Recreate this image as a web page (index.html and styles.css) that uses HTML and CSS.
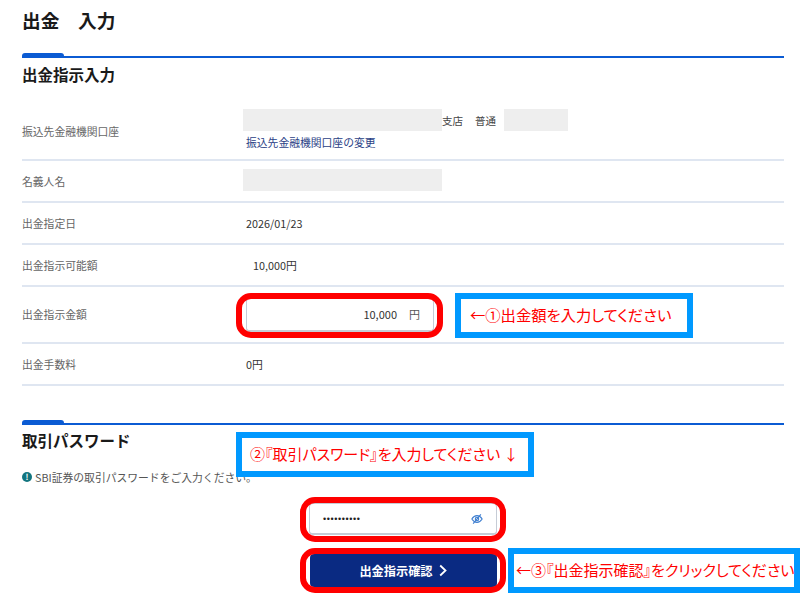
FILE: index.html
```html
<!DOCTYPE html>
<html lang="ja">
<head>
<meta charset="utf-8">
<title>出金 入力</title>
<link rel="stylesheet" href="styles.css">
</head>
<body>
<main class="page">
  <h1 class="title">出金　入力</h1>

  <section class="first">
    <div class="accent"></div>
    <div class="rule"></div>
    <h2 class="heading">出金指示入力</h2>
    <div class="row row-bank">
      <div class="label label-bank">振込先金融機関口座</div>
      <div class="value bank">
        <div class="bank-line">
          <span class="mask mask-wide"></span>
          <span class="bank-text">支店</span>
          <span class="bank-text bank-type">普通</span>
          <span class="mask mask-narrow"></span>
        </div>
        <a class="link" href="#">振込先金融機関口座の変更</a>
      </div>
    </div>
    <div class="row">
      <div class="label">名義人名</div>
      <div class="value"><span class="mask mask-wide mask-name"></span></div>
    </div>
    <div class="row">
      <div class="label">出金指定日</div>
      <div class="value">2026/01/23</div>
    </div>
    <div class="row">
      <div class="label">出金指示可能額</div>
      <div class="value value-inset">10,000円</div>
    </div>
    <div class="row row-input">
      <div class="label label-input">出金指示金額</div>
      <div class="value">
        <div class="field amount"><span>10,000</span><span class="unit">円</span></div>
      </div>
    </div>
    <div class="row">
      <div class="label">出金手数料</div>
      <div class="value">0円</div>
    </div>
  </section>

  <section class="second">
    <div class="accent"></div>
    <div class="rule"></div>
    <h2 class="heading heading-pw">取引パスワード</h2>
    <p class="note"><span class="note-icon">!</span>SBI証券の取引パスワードをご入力ください。</p>
    <div class="form">
      <div class="field password">
        <span class="dots">••••••••••</span>
        <svg class="eye" viewBox="0 0 14 14" width="12" height="12" aria-hidden="true">
          <path d="M1 7c1.600-2.600 3.600-3.900 6-3.900S11.400 4.400 13 7c-1.600 2.600-3.600 3.900-6 3.900S2.600 9.600 1 7z" fill="none" stroke="#3f7fd0" stroke-width="1.300"/>
          <circle cx="7" cy="7" r="2" fill="none" stroke="#3f7fd0" stroke-width="1.300"/>
          <path d="M2.500 12.500 11.500 1.500" stroke="#3f7fd0" stroke-width="1.300" fill="none"/>
        </svg>
      </div>
      <button class="submit" type="button">出金指示確認
        <svg class="chevron" viewBox="0 0 8 12" width="8" height="13" aria-hidden="true"><path d="M1.200 1 6.500 6 1.200 11" fill="none" stroke="#fff" stroke-width="1.800"/></svg>
      </button>
    </div>
  </section>
</main>

<div class="ring ring-amount"></div>
<div class="ring ring-password"></div>
<div class="ring ring-submit"></div>
<div class="callout callout-1">←①出金額を入力してください</div>
<div class="callout callout-2">②『取引パスワード』を入力してください ↓</div>
<div class="callout callout-3">←③『出金指示確認』をクリックしてください</div>
</body>
</html>
```

FILE: styles.css
```css
* { box-sizing: border-box; }
html, body { margin: 0; padding: 0; }
body {
  position: relative;
  width: 800px;
  height: 604px;
  overflow: hidden;
  background: #fff;
  color: #333;
  font-family: "Noto Sans CJK JP", "Inter", sans-serif;
}
.page { padding: 0 16px 0 22px; }
.title {
  height: 53px;
  margin: 0;
  padding-top: 7px;
  font-size: 18.700px;
  line-height: 26px;
  font-weight: 700;
  color: #1a1a1a;
}
.accent {
  width: 42px;
  height: 3px;
  background: #0b5bd3;
  border-radius: 3px 3px 0 0;
}
.rule { height: 2px; background: #0b5bd3; }
.heading {
  height: 51px;
  margin: 0;
  padding-top: 5px;
  font-size: 15.500px;
  line-height: 22px;
  font-weight: 700;
  color: #1a1a1a;
}
.row {
  display: grid;
  grid-template-columns: 224px 1fr;
  align-items: center;
  height: 42px;
  border-bottom: 2px solid #dfe6f1;
  font-size: 10.800px;
}
.row-bank { height: 52px; }
.row-input { height: 57px; }
.label { color: #666; }
.label-bank { padding-bottom: 6px; }
.label-input { padding-bottom: 2px; }
.value { color: #333; }
.value-inset { padding-left: 7px; }
.bank { margin-left: -3px; align-self: start; }
.bank-line { display: flex; align-items: center; height: 22px; }
.bank-text { color: #444; font-size: 10.500px; }
.bank-type { margin-left: 12px; }
.mask { display: block; height: 22px; background: #eee; }
.mask-wide { width: 199px; }
.mask-narrow { width: 64px; margin-left: 8px; }
.mask-name { margin-left: -3px; margin-top: -3px; }
.link {
  display: block;
  margin: 3px 0 0 3px;
  line-height: 17px;
  color: #2b3f86;
  text-decoration: none;
  font-size: 10.800px;
}
.field {
  display: flex;
  align-items: center;
  width: 188px;
  background: #fff;
  border: 1px solid #c6ccd6;
  border-bottom-width: 2px;
  border-radius: 4px;
}
.amount {
  justify-content: flex-end;
  height: 34px;
  padding-right: 13px;
  font-size: 11px;
  color: #333;
}
.unit { margin-left: 12px; color: #555; }
.second { margin-top: 34px; }
.heading-pw { height: 43px; padding-top: 4px; }
.note {
  display: flex;
  align-items: center;
  height: 18px;
  margin: 0;
  font-size: 10.800px;
  color: #555;
}
.note-icon {
  display: flex;
  align-items: center;
  justify-content: center;
  width: 10px;
  height: 10px;
  margin-right: 3px;
  border-radius: 50%;
  background: #13757f;
  color: #fff;
  font-size: 8px;
  font-weight: 700;
  line-height: 10px;
}
.form {
  display: flex;
  flex-direction: column;
  align-items: center;
  gap: 19px;
  margin-top: 17px;
}
.password {
  justify-content: space-between;
  height: 32px;
  padding: 0 13px 0 13px;
}
.dots { font-size: 9px; letter-spacing: 0.600px; color: #222; font-family: "Liberation Sans", sans-serif; }
.submit {
  display: flex;
  align-items: center;
  justify-content: center;
  gap: 6px;
  width: 187px;
  height: 33px;
  border: 0;
  border-radius: 4px;
  background: #0a2a82;
  color: #fff;
  font-family: inherit;
  font-size: 12.200px;
  font-weight: 700;
}
.ring, .callout { position: absolute; height: 45px; border-width: 6px; border-style: solid; }
.ring { border-color: #f00; border-radius: 15px; }
.ring-amount { left: 236px; top: 293px; width: 207px; }
.ring-password { left: 300px; top: 497px; width: 206px; }
.ring-submit { left: 300px; top: 548px; width: 206px; }
.callout {
  display: flex;
  align-items: center;
  border-color: #09f;
  background: #fff;
  color: #f00;
  white-space: nowrap;
  font-family: "Noto Sans CJK JP", sans-serif;
  font-feature-settings: "palt";
  padding-bottom: 3px;
}
.callout-1 { left: 455px; top: 293px; width: 238px; padding-left: 9px; font-size: 15.300px; }
.callout-2 { left: 236px; top: 432px; width: 298px; padding-left: 8px; font-size: 15px; }
.callout-3 { left: 508px; top: 548px; width: 292px; padding-left: 2px; font-size: 15px; }
```
